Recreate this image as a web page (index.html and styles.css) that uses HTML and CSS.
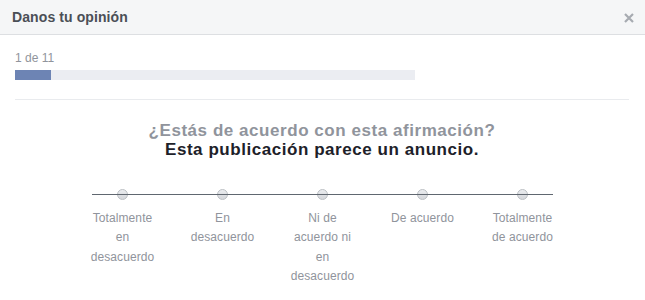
FILE: index.html
```html
<html>
<head>
    <link rel="stylesheet" href="styles.css">
</head>
<body>
    <div class="dialog">
        <div class="dialogHeader">
            <span class="dialogTitle">Danos tu opinión</span>
            <a href="#" class="closeButton" title="Cerrar">
                <svg width="10" height="10" viewBox="0 0 10 10">
                    <path d="M1 1L9 9M9 1L1 9" stroke="#a7abb1" stroke-width="2.2" />
                </svg>
            </a>
        </div>

        <div class="dialogBody">
            <div class="stepCount">1 de 11</div>
            <div class="progressTrack">
                <div class="progressFill" style="width:9%"></div>
            </div>

            <div class="question">
                <div class="questionPrompt">¿Estás de acuerdo con esta afirmación?</div>
                <div class="questionText">Esta publicación parece un anuncio.</div>
            </div>

            <div class="scale">
                <div class="scaleOption">
                    <span class="scaleDot"></span>
                    <span class="scaleLabel">Totalmente en desacuerdo</span>
                </div>
                <div class="scaleOption">
                    <span class="scaleDot"></span>
                    <span class="scaleLabel">En desacuerdo</span>
                </div>
                <div class="scaleOption">
                    <span class="scaleDot"></span>
                    <span class="scaleLabel">Ni de acuerdo ni en desacuerdo</span>
                </div>
                <div class="scaleOption">
                    <span class="scaleDot"></span>
                    <span class="scaleLabel">De acuerdo</span>
                </div>
                <div class="scaleOption">
                    <span class="scaleDot"></span>
                    <span class="scaleLabel">Totalmente de acuerdo</span>
                </div>
            </div>
        </div>
    </div>
</body>
</html>
```

FILE: styles.css
```css
body {
    margin: 0;
    background-color: #fff;
    font-family: "Liberation Sans", Arial, sans-serif;
}

.dialogHeader {
    display: flex;
    align-items: center;
    justify-content: space-between;
    height: 35px;
    padding: 0 11px 0 12px;
    background-color: #f5f6f7;
    border-bottom: 1px solid #dddfe2;
    box-sizing: border-box;
}

.dialogTitle {
    font-size: 14px;
    font-weight: bold;
    letter-spacing: 0.1px;
    color: #4b4f56;
}

.closeButton {
    display: flex;
    margin-top: 1px;
}

.dialogBody {
    padding: 15px 16px 0 15px;
}

.stepCount {
    font-size: 12px;
    line-height: 16px;
    color: #90949c;
}

.progressTrack {
    width: 400px;
    height: 10px;
    margin-top: 4px;
    background-color: #ebedf2;
}

    .progressFill {
        height: 100%;
        background-color: #6d84b4;
    }

.question {
    margin-top: 19px;
    padding-top: 21px;
    border-top: 1px solid #e9ebee;
    text-align: center;
    font-size: 17px;
    font-weight: bold;
    letter-spacing: 0.55px;
    line-height: 19px;
}

.questionPrompt {
    color: #90949c;
}

.questionText {
    color: #1d2129;
}

.scale {
    display: flex;
    justify-content: center;
    margin-top: 30px;
    margin-right: -1px;
    position: relative;
}

    .scale:before {
        content: "";
        position: absolute;
        top: 5px;
        left: 77px;
        right: 77px;
        height: 1px;
        background-color: #606770;
    }

.scaleOption {
    width: 100px;
    display: flex;
    flex-direction: column;
    align-items: center;
}

.scaleDot {
    width: 11px;
    height: 11px;
    border-radius: 50%;
    border: 1px solid #bcc0c4;
    background: linear-gradient(#ebedf0, #d4d6da);
    box-sizing: border-box;
}

.scaleLabel {
    width: 72px;
    margin-top: 9px;
    font-size: 12px;
    line-height: 19.4px;
    letter-spacing: 0.1px;
    color: #90949c;
    text-align: center;
}
```
